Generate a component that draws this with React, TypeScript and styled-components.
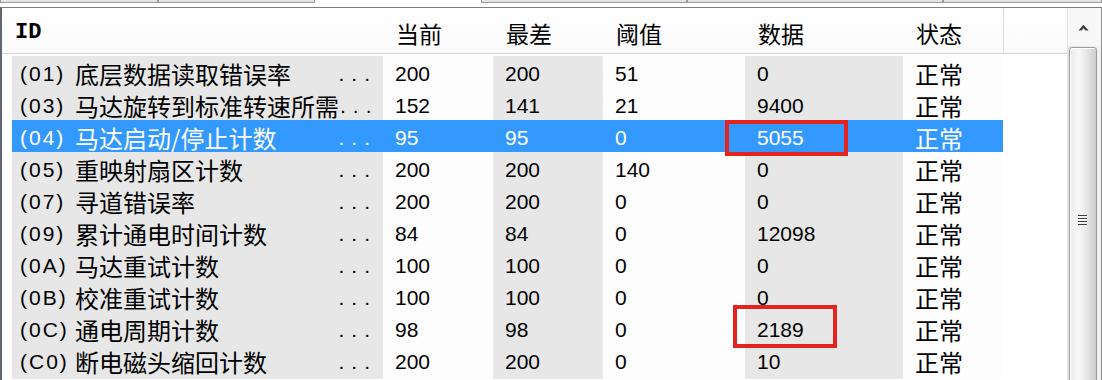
import styled, { createGlobalStyle } from 'styled-components'

const GlobalStyle = createGlobalStyle`
  html, body {
    margin: 0;
    padding: 0;
    background: #fff;
  }
  body {
    overflow: hidden;
  }
`

// column widths: ID, 当前, 最差, 阈值, 数据, 状态
const COLUMNS = '371px 110px 110px 142px 158px 100px'

type Attr = {
  id: string
  name: string
  current: number
  worst: number
  threshold: number
  raw: number
  status: string
  selected?: boolean
  mark?: { left: number; top: number; width: number; height: number }
}

const attributes: Attr[] = [
  { id: '01', name: '底层数据读取错误率', current: 200, worst: 200, threshold: 51, raw: 0, status: '正常' },
  { id: '03', name: '马达旋转到标准转速所需', current: 152, worst: 141, threshold: 21, raw: 9400, status: '正常' },
  {
    id: '04',
    name: '马达启动/停止计数',
    current: 95,
    worst: 95,
    threshold: 0,
    raw: 5055,
    status: '正常',
    selected: true,
    mark: { left: -20, top: 0, width: 123, height: 36 },
  },
  { id: '05', name: '重映射扇区计数', current: 200, worst: 200, threshold: 140, raw: 0, status: '正常' },
  { id: '07', name: '寻道错误率', current: 200, worst: 200, threshold: 0, raw: 0, status: '正常' },
  { id: '09', name: '累计通电时间计数', current: 84, worst: 84, threshold: 0, raw: 12098, status: '正常' },
  { id: '0A', name: '马达重试计数', current: 100, worst: 100, threshold: 0, raw: 0, status: '正常' },
  { id: '0B', name: '校准重试计数', current: 100, worst: 100, threshold: 0, raw: 0, status: '正常' },
  {
    id: '0C',
    name: '通电周期计数',
    current: 98,
    worst: 98,
    threshold: 0,
    raw: 2189,
    status: '正常',
    mark: { left: -12, top: -7, width: 104, height: 43 },
  },
  { id: 'C0', name: '断电磁头缩回计数', current: 200, worst: 200, threshold: 0, raw: 10, status: '正常' },
]

const Window = styled.div`
  width: 1102px;
  height: 380px;
  overflow: hidden;
  display: flex;
  flex-direction: column;
  background: #fff;
  font-family: 'Liberation Sans', 'Noto Sans CJK SC', sans-serif;
  color: #000;
`

const TabStrip = styled.div`
  display: flex;
  height: 7px;
  flex-shrink: 0;
`

const Tab = styled.div<{ $width: number; $active?: boolean }>`
  width: ${(p) => p.$width}px;
  height: 3px;
  box-sizing: border-box;
  background: ${(p) => (p.$active ? '#fff' : '#e4e4e4')};
  border: ${(p) => (p.$active ? 'none' : '1px solid #9a9a9a')};
  border-top: none;
`

const Frame = styled.div`
  flex: 1;
  display: flex;
  min-height: 0;
  border-top: 1px solid #7d7d7d;
  border-left: 2px solid #5f6670;
  border-right: 1px solid #8e8e8e;
`

const ListArea = styled.div`
  flex: 1;
  display: flex;
  flex-direction: column;
  min-width: 0;
`

const HeaderRow = styled.div`
  display: grid;
  grid-template-columns: ${COLUMNS} 1fr;
  height: 46px;
  flex-shrink: 0;
  box-sizing: border-box;
  padding-left: 10px;
  border-bottom: 1px solid #d5d5d5;
  background: linear-gradient(#ffffff, #fbfbfb);
`

const HeaderCell = styled.div<{ $first?: boolean; $filler?: boolean }>`
  display: flex;
  align-items: center;
  padding: 4px 0 0 ${(p) => (p.$first ? 3 : 13)}px;
  font-size: ${(p) => (p.$first ? 22 : 23)}px;
  font-weight: ${(p) => (p.$first ? 700 : 400)};
  font-family: ${(p) =>
    p.$first ? "'Liberation Mono', monospace" : "'Noto Sans CJK SC', sans-serif"};
  border-left: ${(p) => (p.$filler ? '1px solid #dedede' : 'none')};
  white-space: nowrap;
`

const Body = styled.div`
  flex: 1;
  padding: 2px 0 0 10px;
  overflow: hidden;
`

const Row = styled.div`
  display: grid;
  grid-template-columns: ${COLUMNS};
  height: 32px;
`

const Cell = styled.div<{ $shaded?: boolean; $selected?: boolean; $cjk?: boolean }>`
  position: relative;
  display: flex;
  align-items: center;
  padding-left: 12px;
  background: ${(p) => (p.$selected ? '#3399ff' : p.$shaded ? '#e7e7e7' : '#fdfdfd')};
  color: ${(p) => (p.$selected ? '#fff' : '#000')};
  font-size: ${(p) => (p.$cjk ? 24 : 21)}px;
  font-family: ${(p) =>
    p.$cjk ? "'Noto Sans CJK SC', sans-serif" : "'Liberation Sans', sans-serif"};
  white-space: nowrap;
`

const IdCell = styled(Cell)`
  padding-left: 8px;
`

const Code = styled.span`
  width: 55px;
  flex-shrink: 0;
  font-size: 21px;
  letter-spacing: 2px;
  font-family: 'Liberation Sans', sans-serif;
`

const Name = styled.span`
  margin-right: auto;
  font-size: 24px;
  font-family: 'Noto Sans CJK SC', sans-serif;
`

const Dots = styled.span`
  flex-shrink: 0;
  padding: 0 6px 0 1px;
  font-size: 21px;
  letter-spacing: 7px;
  font-family: 'Liberation Sans', sans-serif;
`

const Mark = styled.div<{ $left: number; $top: number; $width: number; $height: number }>`
  position: absolute;
  z-index: 2;
  left: ${(p) => p.$left}px;
  top: ${(p) => p.$top}px;
  width: ${(p) => p.$width}px;
  height: ${(p) => p.$height}px;
  box-sizing: border-box;
  border: 4px solid #e3231d;
  pointer-events: none;
`

const ScrollBar = styled.div`
  width: 33px;
  flex-shrink: 0;
  display: flex;
  flex-direction: column;
  overflow: hidden;
  border-left: 1px solid #e2e2e2;
  background: #f0f0f0;
`

const ArrowButton = styled.div`
  height: 38px;
  flex-shrink: 0;
  display: flex;
  align-items: center;
  justify-content: center;
  padding-right: 2px;
  background: #f7f7f7;
`

const Track = styled.div`
  flex: 1;
  padding: 1px 4px 0 1px;
  background: linear-gradient(90deg, #e6e6e6, #f2f2f2);
`

const Thumb = styled.div`
  height: 346px;
  box-sizing: border-box;
  display: flex;
  align-items: center;
  justify-content: center;
  border: 1px solid #9b9b9b;
  border-radius: 3px 3px 0 0;
  background: linear-gradient(90deg, #ececec 0%, #f8f8f8 35%, #e3e3e3 70%, #cdcdcd 100%);
  box-shadow: inset 1px 1px 0 #ffffff;
`

const Grip = styled.div`
  display: flex;
  flex-direction: column;
  gap: 2px;
  margin-right: 1px;
`

const GripLine = styled.div`
  width: 9px;
  height: 1px;
  background: #3f3f3f;
  box-shadow: 0 1px 0 #ffffff;
`

const tabs = [
  { width: 158 },
  { width: 157 },
  { width: 166, active: true },
  { width: 206 },
  { width: 256 },
  { width: 159 },
]

export default function App() {
  return (
    <>
      <GlobalStyle />
      <Window>
        <TabStrip>
          {tabs.map((t, i) => (
            <Tab key={i} $width={t.width} $active={t.active} />
          ))}
        </TabStrip>
        <Frame>
          <ListArea>
            <HeaderRow>
              <HeaderCell $first>ID</HeaderCell>
              <HeaderCell>当前</HeaderCell>
              <HeaderCell>最差</HeaderCell>
              <HeaderCell>阈值</HeaderCell>
              <HeaderCell>数据</HeaderCell>
              <HeaderCell>状态</HeaderCell>
              <HeaderCell $filler />
            </HeaderRow>
            <Body>
              {attributes.map((a) => (
                <Row key={a.id}>
                  <IdCell $shaded $selected={a.selected}>
                    <Code>({a.id})</Code>
                    <Name>{a.name}</Name>
                    <Dots>...</Dots>
                  </IdCell>
                  <Cell $selected={a.selected}>{a.current}</Cell>
                  <Cell $shaded $selected={a.selected}>{a.worst}</Cell>
                  <Cell $selected={a.selected}>{a.threshold}</Cell>
                  <Cell $shaded $selected={a.selected}>
                    {a.raw}
                    {a.mark && (
                      <Mark
                        $left={a.mark.left}
                        $top={a.mark.top}
                        $width={a.mark.width}
                        $height={a.mark.height}
                      />
                    )}
                  </Cell>
                  <Cell $cjk $selected={a.selected}>{a.status}</Cell>
                </Row>
              ))}
            </Body>
          </ListArea>
          <ScrollBar>
            <ArrowButton>
              <svg width="11" height="7" viewBox="0 0 11 7">
                <path d="M0.5 6.5 L5.5 0.8 L10.5 6.5 L7.5 6.5 L5.5 4.3 L3.5 6.5 Z" fill="#3a3a3a" />
              </svg>
            </ArrowButton>
            <Track>
              <Thumb>
                <Grip>
                  <GripLine />
                  <GripLine />
                  <GripLine />
                  <GripLine />
                </Grip>
              </Thumb>
            </Track>
          </ScrollBar>
        </Frame>
      </Window>
    </>
  )
}
